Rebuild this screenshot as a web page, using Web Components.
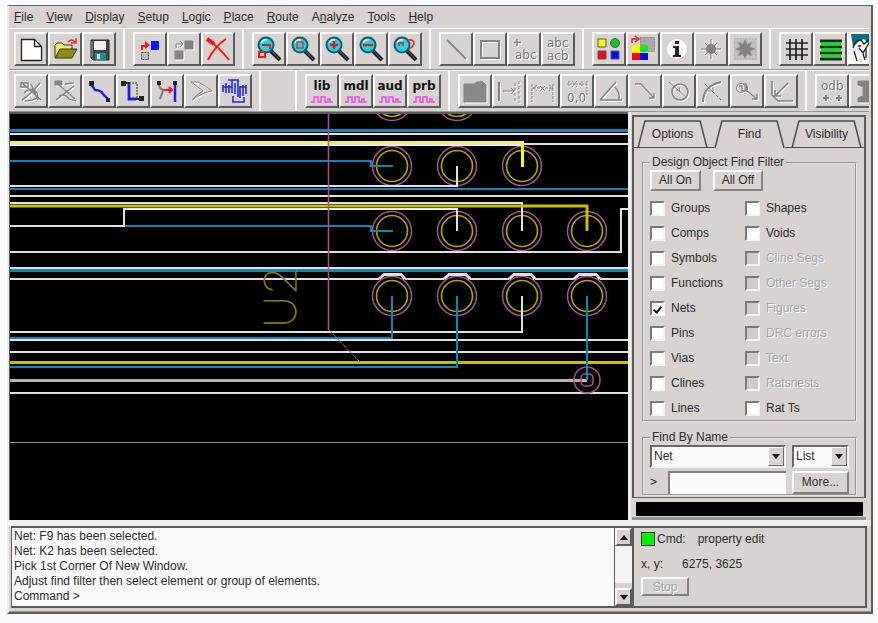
<!DOCTYPE html>
<html lang="en">
<head>
<meta charset="utf-8">
<title>PCB Editor</title>
<style>
body{margin:0;background:#fafafa;font:12px/15px "Liberation Sans",Arial,sans-serif;color:#2c2c2c;
--face:#d8d2d0;--dark:#5c5c5c;--mid:#9a9696;--light:#fafafa;--net-blue:#0888b4;--net-yellow:#c8c000}
</style>
</head>
<body>
<pcb-editor></pcb-editor>
<script>
const define=(name,html,setup)=>{
  const t=document.createElement('template');t.innerHTML=html;
  customElements.define(name,class extends HTMLElement{
    constructor(){super();this.attachShadow({mode:'open'})}
    connectedCallback(){
      if(this.shadowRoot.childNodes.length)return;
      this.shadowRoot.append(t.content.cloneNode(true));
      if(setup)setup(this,this.shadowRoot);
    }
  });
};

const zoomLens=inner=>`<path d="M17 17 26 26" stroke="#222" stroke-width="4"/><path d="M17 16 25 25" stroke="#2a6a90" stroke-width="1"/>
<circle cx="12" cy="11" r="7.5" fill="#18d8e8" stroke="#1a5a70" stroke-width="2"/><path d="M7 9q2-4 6-3" stroke="#d8ffff" stroke-width="1.5"/>${inner}`;
const etched=body=>`<g transform="translate(1 1)" stroke="#fff" fill="none">${body.replace(/fill="#8\w+"/g,'fill="#fff"')}</g><g stroke="#858282" fill="none">${body}</g>`;
const wave='<path d="M4 26h3v-5h4v5h3v-5h4v5h3v-3h2v3h3" stroke="#f048e8" stroke-width="1.500"/>';
const word=t=>`<text x="15" y="14" text-anchor="middle" font-family="DejaVu Sans" font-weight="bold" font-size="12" fill="#111">${t}</text>${wave}`;
const greyText=(x,y,t,s=12)=>`<text x="${x}" y="${y}" font-family="DejaVu Sans" font-size="${s}" fill="#7c7979" style="filter:drop-shadow(1px 1px 0 #fff)">${t}</text>`;
const ICONS={
new:'<path d="M5.5 5.5h13l7 7v14h-20z" fill="#fff" stroke="#222" stroke-width="1.3"/><path d="M18.500 5.500v7h7" stroke="#222" stroke-width="1.3"/>',
open:'<path d="M5 23V11l2-2h5l2 2h8v4" fill="#f4f060" stroke="#333"/><path d="M5 24l5-9h17l-5 9z" fill="#8c8c10" stroke="#333"/><path d="M18 8q4-4 7 0m1-4v5h-5" stroke="#f03030" stroke-width="1.5"/>',
save:'<path d="M7 6h18v20H9l-2-2z" fill="#444" stroke="#222"/><path d="M10 7h12v9H10z" fill="#f0f0f0"/><path d="M11 19h11v7H11z" fill="#189098"/><path d="M13 20h3v5h-3z" fill="#ddd"/><path d="M8 7v16" stroke="#999"/>',
move:'<path d="M16 7h8v9h-8z" fill="#0818f8"/><path d="M6.500 18.500h7v7h-7z" stroke="#444" fill="#bbb" stroke-dasharray="2 1"/><path d="M7 16v-4h5" stroke="#f01818" stroke-width="2"/><path d="M10 7l5 4-5 4z" fill="#f01818"/>',
copy:etched('<path d="M16 7h8v8h-8zM6 17h8v8H6z" fill="#858282"/><path d="M7 14v-4h6m-2-3l3 3-3 3"/>'),
del:'<path d="M4 5q10 6 22 21M23 5Q12 12 5 26" stroke="#f01818" stroke-width="2"/><path d="M4 5l7 5" stroke="#f01818" stroke-width="4"/>',
zoomwin:zoomLens('<path d="M8 11h8v4M5 18h6v5H5z" stroke="#e81818" stroke-width="2"/>'),
zoomfit:zoomLens('<path d="M9 8h6v6H9z" stroke="#e83030" stroke-width="1.500"/>'),
zoomin:zoomLens('<path d="M12 7v8M8 11h8" stroke="#e81818" stroke-width="2.4"/>'),
zoomout:zoomLens('<path d="M7 11h10" stroke="#e81818" stroke-width="2.4"/>'),
zoomprev:zoomLens('<path d="M9 12V9h4v3M18 6q6-1 6 4-1 3-5 5" stroke="#e83030" stroke-width="1.800"/>'),
line:etched('<path d="M6 6l19 19" stroke-width="2"/>'),
rect:etched('<path d="M6 7h18v17H6z" stroke-width="2"/>'),
addtext:greyText(6,25,'abc')+etched('<path d="M8 5v7M5 8.500h7" stroke-width="1.500"/>'),
edittext:greyText(4,13,'abc')+greyText(4,26,'acb'),
color:'<g stroke="#556"><path d="M4 5h8v8H4z" fill="#f8f800"/><circle cx="21" cy="9" r="4.500" fill="#10c820"/><path d="M4 17h8v8H4z" fill="#f80808"/><path d="M17 17h8v8h-8z" fill="#0808f0"/></g>',
swap:'<path d="M12.500 3.500h14v14h-14z" fill="#aaa8a8" stroke="#888" stroke-dasharray="2 1"/><path d="M4 9V5h5M7 2l4 3-4 3" stroke="#f01818" stroke-width="1.500"/><path d="M4 11h8v8H4z" fill="#f8f800"/><circle cx="16" cy="14.500" r="4" fill="#10e820"/><path d="M4 19h8v7H4z" fill="#f80808"/><path d="M12 19h8v7h-8z" fill="#0808f0"/>',
info:'<circle cx="15" cy="15" r="10" fill="#fafafa"/><path d="M13 7h4v3h-4zM11 12h6v9h2v2h-8v-2h2v-7h-2z" fill="#222"/>',
sun:etched('<path d="M15 5v20M5 15h20M9 9l12 12M21 9L9 21"/>')+'<circle cx="15" cy="15" r="5" fill="#858282"/>',
sunon:'<path d="M4 4h23v22H4z" fill="#c4bfbe"/><path d="M4 5h23M4 9h23M4 13h23M4 17h23M4 21h23M4 25h23" stroke="#aaa6a6" stroke-dasharray="1 2"/><path d="M15 5l2 5 5-2-2 5 6 2-6 2 2 5-5-2-2 5-2-5-5 2 2-5-5-2 5-2-2-5 5 2z" fill="#858282"/>',
grid:'<path d="M9 5v21M15 5v21M21 5v21M5 9h22M5 15h22M5 21h22" stroke="#222" stroke-width="1.700"/>',
layers:'<path d="M5 7h22M5 13h22M5 19h22M5 25h22" stroke="#103010" stroke-width="3"/><path d="M6 10h20M6 16h20M6 22h20" stroke="#10e020" stroke-width="3"/>',
cursor:'<path d="M0 0h30v30H0z" fill="#f6f6f6"/><path d="M2 0h25v6l-7 4-5-5-5 2-6 6z" fill="#067080"/><path d="M4 14q2-8 8-8l3 4 7-6M9 12h3M5 17l3 10M10 14l4 5 6-10M14 20l2 6M17 14v10" stroke="#222" stroke-width="1.300"/><path d="M11 25l2 3" stroke="#e0d020" stroke-width="2"/>',
unrats:etched('<path d="M5 7h7v4H5zM5 6l20 18M6 24q8-5 18-17M8 17q8-7 13 0 4 7-12 8M15 8l7 16" stroke-width="1.500"/>'),
rats:etched('<path d="M5 5h7v4H5z" fill="#858282"/><path d="M8 8l17 15M6 24l18-14M9 20q6-3 10 3l7 2M15 8l9-1" stroke-width="1.300"/>'),
route:'<path d="M7 8l4 6q6 0 8 4l6 6" stroke="#1820e8" stroke-width="2.400"/><path d="M5 5h5v5H5zM22 22h4v4h-4z" fill="#222"/>',
custom:'<path d="M11 8v15h7" stroke="#1820e8" stroke-width="2.800"/><path d="M11 7h8v15" stroke="#333" stroke-dasharray="2 1"/><path d="M3 5h5v5H3zM21 20h5v5h-5z" fill="#222"/><path d="M8 7h4M18 23h4" stroke="#222" stroke-width="2"/>',
slide:'<path d="M7 8q0 4 4 6-1 4-3 9" stroke="#777" stroke-width="2"/><path d="M23 7v19" stroke="#1820e8" stroke-width="2.500"/><path d="M5 5h4v4H5zM21 5h4v4h-4z" fill="#222"/><path d="M12 14h7m-2-3l3 3-3 3" stroke="#f01818" stroke-width="2"/>',
miter:etched('<path d="M5 6h7q8 4 14 9-9 1-20 9 4-5 11-9Q12 11 5 6z"/>'),
tune:'<path d="M3 16V9m3 8V7m3 10V9m3 8V4h6v17m-3-3V8h1M3 11h9M20 22V10m3 10V9m3 9V9M20 11h6M13 20v6h11v-5M8 4h11" stroke="#2028e8" stroke-width="1.600"/>',
lib:word('lib'),mdl:word('mdl'),aud:word('aud'),prb:word('prb'),
place:etched('<path d="M4 8h10l3-2h6l3 3v17H4z" fill="#8a8888"/><path d="M18 8q3-6 6 0v3"/>'),
dim1:etched('<path d="M5 6v19" stroke-width="2"/><path d="M9 15h11m-3-3l3 3-3 3"/><path d="M25 5v22M21 7v18" stroke-dasharray="3 2"/>'),
dim2:etched('<path d="M4 8v18M25 8v18M5 12h20M9 9l-4 3 4 3M21 9l4 3-4 3M12 10l5 5m0-5l-5 5" stroke-dasharray="3 1"/>'),
dim0:etched('<path d="M5 8h20M7 5v6M25 5v14M10 5l5 6m0-6l-5 6M20 5v6" stroke-dasharray="2 1"/>')+greyText(5,26,'0,0',12),
angle:etched('<path d="M4 24h22M4 24L20 6M19 11q5 5 4 13" stroke-width="1.500"/>'),
leader:etched('<path d="M5 8h6l13 14m0-5v5h-5" stroke-width="1.300"/>'),
dia:etched('<circle cx="16" cy="16" r="8" stroke-width="1.600"/><path d="M5 6l18 16m-7-7l-4-1m4 2l-1-5"/>'),
arc:etched('<path d="M5 26Q5 10 23 6" stroke-width="2"/><path d="M7 8l16 16M10 15h5v-5" stroke-dasharray="4 1"/>'),
balloon:etched('<circle cx="9" cy="12" r="4.500"/><path d="M7 10h3v5h4V8h-3M15 15l10 8m0-5v5h-5M14 8q3 4 0 8" stroke-width="1.300"/>'),
chamfer:etched('<path d="M6 5v14l6 6h15M22 7L9 20m0-6v6h6" stroke-width="1.600"/>'),
odb:greyText(4,14,'odb')+etched('<path d="M6 22h6M9 19v6M19 22h6M22 19v6" stroke-width="2"/>'),
ibeam:etched('<path d="M7 5h16v4l-5 2v9l5 2v4H7v-4l5-2v-9L7 9z" fill="#858282"/>')
};

define('tool-button',`<style>
:host{display:block;flex:none;width:34px;height:34px}
button{box-sizing:border-box;width:100%;height:100%;padding:0;background:var(--face);border:2px solid;border-color:var(--light) var(--dark) var(--dark) var(--light);display:block}
svg{display:block;width:100%;height:100%;overflow:hidden}
</style><button type="button"><svg viewBox="0 0 30 30" fill="none"></svg></button>`,(h,r)=>{
  r.querySelector('button').setAttribute('aria-label',h.getAttribute('icon'));
  r.querySelector('svg').innerHTML=ICONS[h.getAttribute('icon')];
});

define('tool-group',`<style>
:host{display:flex;flex:none;padding:3px 7px 3px 8px;border-right:2px solid;border-image:linear-gradient(90deg,#8a8686 50%,#fafafa 50%) 1}
:host(:first-of-type){padding-left:3px}
:host([blank]){padding:0;width:34px}
</style><slot></slot>`,(h,r)=>{
  (h.getAttribute('tools')||'').split(' ').filter(Boolean).forEach(n=>{
    const b=document.createElement('tool-button');b.setAttribute('icon',n);r.append(b);
  });
});

define('tool-row',`<style>
:host{display:flex;overflow:hidden;padding-left:2px;margin-right:2px;border-top:1px solid var(--light);border-bottom:1px solid var(--mid)}
</style><slot></slot>`);

define('menu-bar',`<style>
:host{display:block}
nav{display:flex;gap:13px;padding:4px 5px 3px}
a{color:inherit;text-decoration:none}
</style><nav></nav>`,(h,r)=>{
  r.querySelector('nav').innerHTML=['<u>F</u>ile','<u>V</u>iew','<u>D</u>isplay','<u>S</u>etup','<u>L</u>ogic','<u>P</u>lace','<u>R</u>oute','A<u>n</u>alyze','<u>T</u>ools','<u>H</u>elp'].map(t=>`<a href="#">${t}</a>`).join('');
});

const pads=[[392,101],[457,101],...[392,457,522].map(x=>[x,166]),...[392,457,522,587].flatMap(x=>[[x,231],[x,296]])];
define('board-view',`<style>
:host{display:block;background:#000;border-top:2px solid var(--dark);min-width:0;overflow:hidden}
svg{display:block;width:100%}
.w{stroke:#e4dfe2}.b{stroke:var(--net-blue)}.y{stroke:var(--net-yellow)}
.pink{stroke:#a85490}
</style><svg viewBox="10 114 618 406" fill="none" stroke-width="2" role="img" aria-label="Board layout">
<g class="pads"></g>
<path class="b" stroke-width="3" d="M10 130.500H628"/><path class="w" d="M10 134H628M10 144H628"/>
<path stroke="#fdfa10" d="M10 142H522"/><path stroke="#fdfa10" stroke-width="3" d="M522.500 141V167"/>
<path class="b" d="M10 161H371V166H393M10 189H628M124 226H371V231H393"/>
<path class="w" d="M10 186H457V166"/><path class="w" d="M10 196H628M10 203H522V231"/>
<path class="w" d="M10 226H124V209H457V231M10 252H621V209H628"/><path class="y" stroke-width="3" d="M10 206H587V231"/>
<path stroke="#fff" stroke-width="1" d="M10 145.500H522M125 209.500H457"/>
<path class="w" d="M10 268H628"/><path class="b" stroke-width="3" d="M10 270.500H628"/>
<path class="w" d="M10 279H379M405 279H444M470 279H509M535 279H574M600 279H628"/>
<path class="w" stroke-width="3" d="M379 279l5-4.500h17l4 4.500M444 279l5-4.500h17l4 4.500M509 279l5-4.500h17l4 4.500M574 279l5-4.500h17l4 4.500"/>
<path class="w" d="M10 332H522V296"/><path class="b" d="M10 338H392V296M587 296V380"/>
<path class="w" d="M10 340H628M10 352H628"/><path class="y" stroke-width="3" d="M10 362.500H628"/>
<path class="b" d="M10 367H457V296"/><path class="w" stroke-width="3" stroke-opacity=".8" d="M10 380.500H587"/>
<path class="w" d="M10 393H628"/><path stroke="#8c8a8c" stroke-width="1" d="M10 442.500H628"/>
<path class="pink" stroke-width="1.500" d="M328.500 113V330"/><path class="pink" stroke-width="1" stroke-dasharray="6 1" d="M328 329L360 362"/>
<circle class="pink" cx="587" cy="380" r="13" stroke-width="1.500"/><rect class="pink" x="581" y="374" width="12" height="12" rx="4" stroke-width="1.500"/><path d="M587 296V380" class="b"/>
<g font-family="Lato" font-weight="100" font-size="45" fill="#8c7a10" stroke="#8c7a10" stroke-width="1"><text transform="translate(296 328) rotate(-90)">U</text><text transform="translate(296 294) rotate(-90)">2</text></g>
</svg>`,(h,r)=>{
  r.querySelector('.pads').innerHTML=pads.map(([x,y])=>`<circle cx="${x}" cy="${y}" r="19.500" class="pink" stroke-width="1.500"/><circle cx="${x}" cy="${y}" r="15.500" stroke="#b0a800" stroke-width="1.600"/>`).join('');
});

define('check-item',`<style>
:host{display:block}
label{display:flex;align-items:center;gap:6px;height:15px}
input{appearance:none;box-sizing:border-box;flex:none;width:15px;height:15px;margin:0;background:#fdfdfd;border:2px solid;border-color:#7c7878 #f4f2f2 #f4f2f2 #7c7878;display:grid;place-items:center}
input:disabled{background:#d0cac8}
input:checked::after{content:"";width:3px;height:6px;border:solid #111;border-width:0 2px 2px 0;transform:rotate(40deg)}
:host([disabled]) span{color:#aaa6a8;text-shadow:1px 1px #fafafa}
</style><label><input type="checkbox"><span><slot></slot></span></label>`,(h,r)=>{
  const i=r.querySelector('input');i.checked=h.hasAttribute('checked');i.disabled=h.hasAttribute('disabled');
});

define('push-button',`<style>
:host{display:block}
button{font:inherit;color:inherit;box-sizing:border-box;width:100%;height:100%;padding:1px 7px;background:var(--face);border:2px solid;border-color:var(--light) #848080 #848080 var(--light)}
button:disabled{color:#aaa6a8;text-shadow:1px 1px #fafafa}
</style><button type="button"><slot></slot></button>`,(h,r)=>{r.querySelector('button').disabled=h.hasAttribute('disabled')});

define('tab-button',`<style>
:host{display:block;position:relative;flex:1}
button{position:relative;font:inherit;color:inherit;width:100%;height:28px;padding:0;border:0;background:none;display:block}
svg{position:absolute;inset:0;width:100%;height:100%}
:host([active]) svg{background:var(--face)}
</style><svg viewBox="0 0 72 28" preserveAspectRatio="none" fill="none" stroke="#4c4c4c"><path d="M1 28L8 1H64L71 28" stroke-width="1.500"/></svg><button type="button" role="tab"><slot></slot></button>`);

define('drop-down',`<style>
:host{display:block;position:relative;height:23px;min-width:0}
select{appearance:none;font:inherit;color:inherit;box-sizing:border-box;width:100%;height:100%;padding:0 18px 0 2px;margin:0;border-radius:0;background:#fafafa;border:2px solid;border-color:#6c6868 #f4f2f2 #f4f2f2 #6c6868}
i{position:absolute;right:2px;top:2px;bottom:2px;width:16px;box-sizing:border-box;background:var(--face);border:1px solid;border-color:var(--light) #6c6868 #6c6868 var(--light);display:grid;place-items:center;pointer-events:none}
i::before{content:"";border:4px solid transparent;border-top:5px solid #111;border-bottom:0}
</style><select><option></option></select><i></i>`,(h,r)=>{
  r.querySelector('select').setAttribute('aria-label',h.getAttribute('label'));
  r.querySelector('option').textContent=h.getAttribute('value');
});

define('group-box',`<style>
:host{display:block}
fieldset{margin:0;padding:0 6px 3px;border:2px groove #e8e4e4;min-width:0}
legend{margin-left:0;padding:0 2px;line-height:15px}
</style><fieldset><legend></legend><slot></slot></fieldset>`,(h,r)=>{r.querySelector('legend').textContent=h.getAttribute('heading')});

define('find-panel',`<style>
:host{display:flex;flex-direction:column;box-sizing:border-box;min-width:0;padding:3px 5px 0 1px;border-left:3px solid #f2f0ee;background:var(--face)}
.frame{border:2px solid var(--dark);border-bottom-width:1px;flex:1;padding:3px 2px 0 4px}
.tabs{display:flex;gap:6px;background:linear-gradient(#4c4c4c,#4c4c4c) 0 100%/100% 1px no-repeat;margin:0 -2px 7px -4px;padding:0 2px 0 3px}
group-box{margin:0 5px 8px 4px}
.row{display:flex;gap:12px}
.checks{display:grid;grid-template-columns:95px 1fr;row-gap:10px;margin:10px 0 1px}
.pick{display:grid;grid-template-columns:minmax(0,1fr) 57px;gap:3px 6px;margin-bottom:-3px}
.pick label{display:flex;min-width:0;gap:11px;align-items:center}
.pick input{font:inherit;flex:1;min-width:0;box-sizing:border-box;height:23px;border:solid #848080;border-width:2px 0 0 2px;background:#fafafa}
.name{margin-bottom:0}
.bar{height:14px;background:#000;margin:4px 3px 1px 4px}
.foot{height:3px;background:#979393}
</style><div class="frame"><div class="tabs" role="tablist"><tab-button>Options</tab-button><tab-button active>Find</tab-button><tab-button>Visibility</tab-button></div>
<group-box heading="Design Object Find Filter"><div class="row"><push-button>All On</push-button><push-button>All Off</push-button></div>
<div class="checks"></div></group-box>
<group-box class="name" heading="Find By Name"><div class="pick"><drop-down label="Kind" value="Net"></drop-down><drop-down label="Source" value="List"></drop-down>
<label>&gt;<input type="text" aria-label="Name"></label><push-button>More...</push-button></div></group-box></div>
<div class="bar"></div><div class="foot"></div>`,(h,r)=>{
  const L=['Groups','Comps','Symbols','Functions','+Nets','Pins','Vias','Clines','Lines'],R=['Shapes','Voids','-Cline Segs','-Other Segs','-Figures','-DRC errors','-Text','-Ratsnests','Rat Ts'];
  const item=t=>`<check-item${t[0]=='+'?' checked':t[0]=='-'?' disabled':''}>${t.replace(/^[+-]/,'')}</check-item>`;
  r.querySelector('.checks').innerHTML=L.map((l,i)=>item(l)+item(R[i])).join('');
});

define('message-log',`<style>
:host{display:flex;min-width:0;border:2px solid var(--dark);border-width:2px 0 2px 1px;background:#fafafa}
.text{flex:1;padding:1px 2px 2px;border-right:1px solid var(--dark)}
p{margin:0}
.bar{width:17px;display:flex;flex-direction:column;background:#f4f2f2}
button{height:18px;padding:0;border:2px solid;border-color:var(--light) var(--dark) var(--dark) var(--light);background:var(--face);display:grid;place-items:center}
button::before{content:"";border:4px solid transparent;border-top:0;border-bottom:5px solid #111}
button:last-child::before{transform:rotate(180deg)}
.track{flex:1;border-bottom:5px solid var(--face)}
</style><div class="text"><p>Net: F9 has been selected.</p><p>Net: K2 has been selected.</p><p>Pick 1st Corner Of New Window.</p><p>Adjust find filter then select element or group of elements.</p><p>Command &gt;</p></div>
<div class="bar"><button type="button" aria-label="Scroll up"></button><div class="track"></div><button type="button" aria-label="Scroll down"></button></div>`);

define('status-panel',`<style>
:host{display:grid;grid-template-columns:max-content 1fr;align-content:start;gap:10px 12px;padding:4px 7px;border:2px solid var(--dark);background:var(--face)}
.cmd{display:flex;gap:2px}
.led{width:12px;height:12px;background:#08f008;border:1px solid #333}
.xy{display:flex;gap:19px;grid-column:1/3}
push-button{width:48px;height:19px;grid-column:1/3;margin-top:-5px}
</style><span class="cmd"><i class="led"></i>Cmd:</span><span>property edit</span><span class="xy"><span>x, y:</span><span>6275, 3625</span></span><push-button disabled>Stop</push-button>`);

define('pcb-editor',`<style>
:host{display:flex;flex-direction:column;box-sizing:border-box;margin:5px 5px 7px 7px;background:var(--face);border-top:1px solid #5468a0;border-left:2px solid #f0eded;border-right:2px solid var(--dark);border-bottom:2px solid var(--dark)}
main{display:grid;grid-template-columns:minmax(0,1fr) 243px;border-left:1px solid var(--dark)}
footer{display:grid;grid-template-columns:minmax(0,1fr) 235px;padding:0 4px 3px 2px;border-top:6px solid #f0eeec;border-bottom:1px solid var(--mid)}
</style><menu-bar></menu-bar>
<tool-row><tool-group tools="new open save"></tool-group><tool-group tools="move copy del"></tool-group><tool-group tools="zoomwin zoomfit zoomin zoomout zoomprev"></tool-group><tool-group tools="line rect addtext edittext"></tool-group><tool-group tools="color swap info sun sunon"></tool-group><tool-group tools="grid layers cursor"></tool-group></tool-row>
<tool-row><tool-group tools="unrats rats route custom slide miter tune"></tool-group><tool-group blank></tool-group><tool-group tools="lib mdl aud prb"></tool-group><tool-group tools="place dim1 dim2 dim0 angle leader dia arc balloon chamfer"></tool-group><tool-group tools="odb ibeam"></tool-group></tool-row>
<main><board-view></board-view><find-panel></find-panel></main>
<footer><message-log></message-log><status-panel></status-panel></footer>`);
</script>
</body>
</html>
